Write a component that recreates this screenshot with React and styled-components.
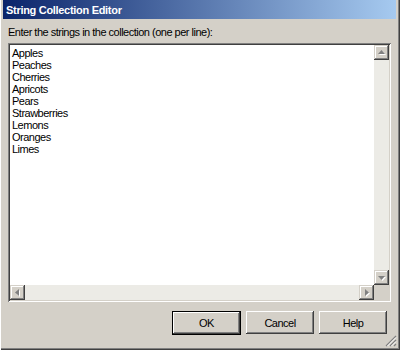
import React from 'react';
import styled, { createGlobalStyle } from 'styled-components';

const GlobalStyle = createGlobalStyle`
  html, body {
    margin: 0;
    padding: 0;
    background: #d4d0c8;
  }
  body {
    font-family: Tahoma, "Liberation Sans", Arial, sans-serif;
    font-size: 11px;
    letter-spacing: -0.5px;
    color: #000;
  }
`;

const Window = styled.div`
  position: relative;
  width: 400px;
  height: 350px;
  box-sizing: border-box;
  padding: 0 4px 4px 3px;
  background: #d4d0c8;
  display: flex;
  flex-direction: column;
  box-shadow: inset 1px 0 #ffffff, inset -1px -1px #404040, inset -2px -2px #808080;
`;

const TitleBar = styled.div`
  height: 19px;
  flex: none;
  display: flex;
  align-items: center;
  padding: 0 3px;
  background: linear-gradient(to right, #0a246a, #a6caf0);
  color: #fff;
  font-weight: bold;
  font-size: 11px;
  letter-spacing: -0.3px;
`;

const Body = styled.div`
  flex: 1;
  display: flex;
  flex-direction: column;
  padding: 7px 5px 0 5px;
`;

const Label = styled.div`
  line-height: 13px;
  height: 13px;
`;

const SunkenBox = styled.div`
  margin-top: 4px;
  height: 259px;
  box-sizing: border-box;
  padding: 2px;
  background: #fff;
  box-shadow: inset 1px 1px #808080, inset -1px -1px #ffffff, inset 2px 2px #404040, inset -2px -2px #d4d0c8;
  display: grid;
  grid-template-columns: 1fr 15px;
  grid-template-rows: 1fr 15px;
`;

const Lines = styled.div`
  padding: 2px 2px;
  overflow: hidden;
`;

const Line = styled.div`
  line-height: 12px;
  height: 12px;
  white-space: nowrap;
`;

const Track = styled.div`
  display: flex;
  flex-direction: ${(p) => (p.$vertical ? 'column' : 'row')};
  justify-content: space-between;
  background: #ecebe6;
`;

const ArrowButton = styled.div`
  width: 15px;
  height: 15px;
  flex: none;
  box-sizing: border-box;
  background: #d4d0c8;
  display: flex;
  align-items: center;
  justify-content: center;
  box-shadow: inset -1px -1px #404040, inset 1px 1px #d4d0c8, inset -2px -2px #808080, inset 2px 2px #ffffff;
`;

const Corner = styled.div`
  background: #d4d0c8;
`;

const ButtonRow = styled.div`
  display: flex;
  justify-content: flex-end;
  gap: 5px;
  margin-top: 9px;
  padding-right: 4px;
`;

const Button = styled.button`
  width: ${(p) => (p.$default ? '69px' : '68px')};
  height: ${(p) => (p.$default ? '24px' : '23px')};
  padding: 0;
  border: ${(p) => (p.$default ? '1px solid #000' : 'none')};
  box-sizing: border-box;
  background: #d4d0c8;
  font-family: inherit;
  font-size: 11px;
  letter-spacing: inherit;
  color: #000;
  box-shadow: inset -1px -1px #404040, inset 1px 1px #ffffff, inset -2px -2px #808080, inset 2px 2px #d4d0c8;
`;

const Grip = styled.svg`
  position: absolute;
  right: 3px;
  bottom: 3px;
`;

const paths = {
  up: 'M7.5 5 L11 9 L4 9 Z',
  down: 'M4 6 L11 6 L7.5 10 Z',
  left: 'M9 4 L9 11 L5 7.5 Z',
  right: 'M6 4 L6 11 L10 7.5 Z',
};

const Arrow = ({ dir }) => (
  <ArrowButton>
    <svg width="15" height="15" viewBox="0 0 15 15">
      <path d={paths[dir]} fill="#ffffff" transform="translate(1 1)" />
      <path d={paths[dir]} fill="#808080" />
    </svg>
  </ArrowButton>
);

const fruits = ['Apples', 'Peaches', 'Cherries', 'Apricots', 'Pears', 'Strawberries', 'Lemons', 'Oranges', 'Limes'];

export default function App() {
  return (
    <>
      <GlobalStyle />
      <Window>
        <TitleBar>String Collection Editor</TitleBar>
        <Body>
          <Label>Enter the strings in the collection (one per line):</Label>
          <SunkenBox>
            <Lines>
              {fruits.map((f) => (
                <Line key={f}>{f}</Line>
              ))}
            </Lines>
            <Track $vertical>
              <Arrow dir="up" />
              <Arrow dir="down" />
            </Track>
            <Track>
              <Arrow dir="left" />
              <Arrow dir="right" />
            </Track>
            <Corner />
          </SunkenBox>
          <ButtonRow>
            <Button $default>OK</Button>
            <Button>Cancel</Button>
            <Button>Help</Button>
          </ButtonRow>
        </Body>
        <Grip width="12" height="12" viewBox="0 0 12 12">
          <path d="M11 1 L1 11 M11 5 L5 11 M11 9 L9 11" stroke="#808080" strokeWidth="1.2" />
          <path d="M11 2.5 L2.5 11 M11 6.5 L6.5 11" stroke="#ffffff" strokeWidth="1" />
        </Grip>
      </Window>
    </>
  );
}
